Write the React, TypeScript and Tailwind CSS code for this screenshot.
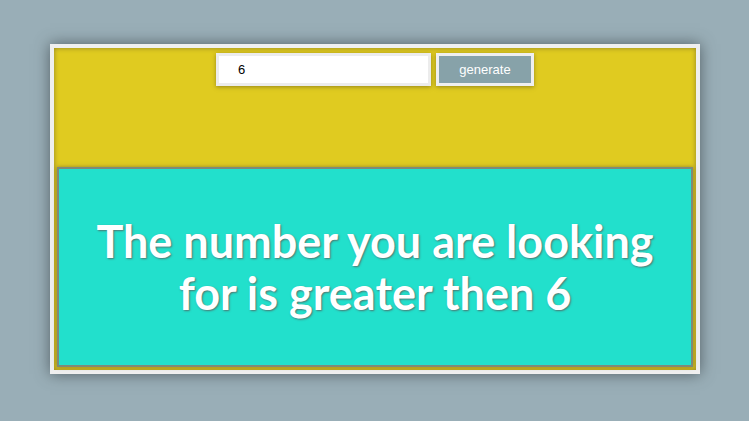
export default function App() {
  return (
    <div className="w-[749px] h-[421px] bg-[#99aeb7] pt-[44px] pl-[50px]">
      <div className="w-[650px] h-[330px] border-4 border-[#efefef] shadow-[0_0_14px_rgba(60,70,75,0.75)]">
        <div className="h-full flex flex-col bg-[#e0cb20] shadow-[inset_0_0_5px_rgba(90,80,40,0.6)] px-[3px] pb-[3px]">
          <div className="h-[119px] flex justify-center gap-[5px] pt-[5px]">
            <input
              defaultValue="6"
              className="w-[215px] h-[33px] bg-white border-[3px] border-[#ececec] pl-[19px] text-[13px] text-black shadow-[0_1px_4px_rgba(80,70,20,0.5)] outline-none font-['Liberation_Sans',sans-serif]"
            />
            <button className="w-[98px] h-[33px] bg-[#87a2a9] border-[3px] border-[#efefef] text-white text-[13px] shadow-[0_1px_4px_rgba(80,70,20,0.5)] font-['Liberation_Sans',sans-serif]">
              generate
            </button>
          </div>
          <div className="flex-1 flex items-center justify-center bg-[#22e0cc] border-2 border-[#7f8a78] shadow-[0_0_4px_rgba(90,80,40,0.6)]">
            <p className="text-center text-white font-bold text-[45px] leading-[52px] font-['Lato',sans-serif] px-8 [text-shadow:1px_1px_2px_rgba(90,90,90,0.8)]">
              The number you are looking for is greater then 6
            </p>
          </div>
        </div>
      </div>
    </div>
  );
}
